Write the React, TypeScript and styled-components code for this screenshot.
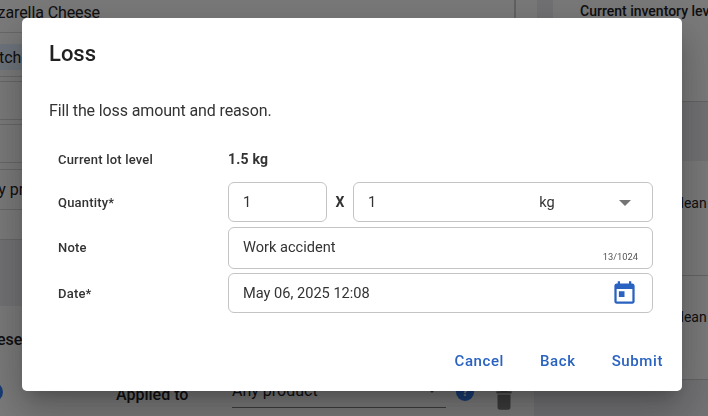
import { createGlobalStyle, styled } from 'styled-components';

const GlobalStyle = createGlobalStyle`
  html, body {
    margin: 0;
    padding: 0;
    overflow: hidden;
    background: #f4f4f5;
    font-family: Roboto, "Liberation Sans", sans-serif;
  }
`;

/* the page behind the dialog */
const Page = styled.div`
  display: grid;
  grid-template-columns: 537px 16px 1fr;
  width: 708px;
  height: 416px;
  overflow: hidden;
  color: #1f2024;
  font-size: 16px;
`;

const LeftPane = styled.div`
  display: flex;
  flex-direction: column;
  overflow: hidden;
`;

const SideBand = styled.div`
  background: #e4e4ea;
`;

const RightPane = styled.div`
  display: flex;
  flex-direction: column;
  overflow: hidden;
`;

const LeftRow = styled.div<{ $h: number; $line?: boolean; $tint?: string }>`
  flex: none;
  height: ${({ $h }) => $h}px;
  box-sizing: border-box;
  display: flex;
  align-items: center;
  white-space: nowrap;
  background: ${({ $tint }) => $tint || 'transparent'};
  border-bottom: ${({ $line }) => ($line ? '1px solid #cfcfd2' : '0')};
`;

const HeadCell = styled.div`
  width: 516px;
  height: 100%;
  box-sizing: border-box;
  padding-bottom: 8px;
  display: flex;
  align-items: center;
  letter-spacing: -0.1px;
  border-right: 2px solid #c4c4c6;
`;

const CutText = styled.span<{ $shift: number; $bold?: boolean }>`
  margin-left: ${({ $shift }) => $shift}px;
  font-weight: ${({ $bold }) => ($bold ? 500 : 400)};
`;

const Chip = styled.div`
  margin-left: -37px;
  padding: 0 14px 0 22px;
  height: 26px;
  display: flex;
  align-items: center;
  background: #dbe7f7;
  font-size: 16px;
`;

const AppliedRow = styled.div`
  flex: none;
  display: flex;
  align-items: flex-start;
  height: 44px;
`;

const HelpDot = styled.div`
  flex: none;
  width: 20px;
  height: 20px;
  margin: 10px 0 0 -17px;
  border-radius: 50%;
  background: #2f78e8;
`;

const AppliedLabel = styled.span`
  flex: none;
  margin: 13px 0 0 113px;
  width: 116px;
  line-height: 19px;
  font-weight: 500;
  font-size: 16px;
`;

const FakeSelect = styled.div`
  flex: none;
  width: 214px;
  height: 32px;
  margin-top: 4px;
  box-sizing: border-box;
  border-bottom: 1px solid #77777a;
  display: flex;
  align-items: center;
  justify-content: space-between;
  padding: 0 9px 2px 0;
`;

const SmallCaret = styled.div`
  width: 0;
  height: 0;
  border-left: 5px solid transparent;
  border-right: 5px solid transparent;
  border-top: 5px solid #555;
`;

const HelpIcon = styled.div`
  flex: none;
  width: 18px;
  height: 18px;
  margin: 11px 0 0 10px;
  border-radius: 50%;
  background: #2f78e8;
  color: #fff;
  font-size: 13px;
  font-weight: 700;
  line-height: 18px;
  text-align: center;
`;

const TrashIcon = styled.svg`
  flex: none;
  width: 26px;
  height: 26px;
  margin: 15px 0 0 17px;
  fill: #777;
`;

const PaneEdge = styled.div`
  align-self: stretch;
  margin-left: auto;
  width: 3px;
  background: #e4e4ea;
`;

const RightRow = styled.div<{ $h: number; $line?: boolean; $tint?: string; $lift?: number }>`
  flex: none;
  height: ${({ $h }) => $h}px;
  box-sizing: border-box;
  display: flex;
  align-items: center;
  padding: 0 0 ${({ $lift }) => $lift || 0}px 27px;
  white-space: nowrap;
  font-size: 14px;
  background: ${({ $tint }) => $tint || 'transparent'};
  border-bottom: ${({ $line }) => ($line ? '1px solid #c8c8cb' : '0')};
`;

const InventoryLabel = styled.span`
  font-size: 14px;
  font-weight: 500;
`;

const DeanText = styled.span`
  margin-left: 96px;
  font-size: 14px;
`;

/* dialog */
const Backdrop = styled.div`
  position: fixed;
  inset: 0;
  background: rgba(0, 0, 0, 0.5);
  display: flex;
  align-items: flex-start;
  padding: 18px 0 0 22px;
`;

const Dialog = styled.div`
  width: 660px;
  height: 373px;
  box-sizing: border-box;
  padding: 24px 19px 0 27px;
  background: #fff;
  border-radius: 5px;
  color: #212121;
  box-shadow: 0 11px 15px -7px rgba(0, 0, 0, 0.2), 0 24px 38px 3px rgba(0, 0, 0, 0.14),
    0 9px 46px 8px rgba(0, 0, 0, 0.12);
  display: flex;
  flex-direction: column;
`;

const Title = styled.h2`
  margin: 0;
  font-size: 22px;
  line-height: 24px;
  font-weight: 500;
`;

const Intro = styled.p`
  margin: 33px 0 0;
  font-size: 16px;
  line-height: 24px;
  letter-spacing: -0.13px;
  color: #333;
`;

const Form = styled.div`
  margin-top: 26px;
  padding-left: 9px;
  padding-right: 10px;
  display: grid;
  grid-template-columns: 170px 1fr;
  grid-template-rows: 29px 40px 43px 40px;
  row-gap: 4px;
  align-items: center;
`;

const Label = styled.div`
  font-size: 13px;
  font-weight: 500;
  letter-spacing: 0.2px;
  color: #333;
`;

const LevelLabel = styled(Label)`
  align-self: start;
  line-height: 21px;
`;

const LevelValue = styled.div`
  align-self: start;
  font-size: 14px;
  line-height: 21px;
  font-weight: 700;
  letter-spacing: 0.2px;
  color: #333;
`;

const QuantityRow = styled.div`
  display: flex;
  align-items: center;
  height: 40px;
`;

const Field = styled.div<{ $grow?: boolean; $w?: number }>`
  position: relative;
  box-sizing: border-box;
  width: ${({ $w }) => ($w ? `${$w}px` : 'auto')};
  flex: ${({ $grow }) => ($grow ? 1 : 'none')};
  height: 40px;
  padding: 0 14px;
  border: 1px solid #c4c4c4;
  border-radius: 6px;
  display: flex;
  align-items: center;
  font-size: 14.6px;
  color: #333;
`;

const NoteField = styled(Field)`
  align-self: end;
  height: 42px;
  padding-bottom: 2px;
`;

const Times = styled.span`
  width: 26px;
  text-align: center;
  font-size: 14px;
  font-weight: 700;
  color: #333;
`;

const Unit = styled.span`
  margin-left: 163px;
`;

const Caret = styled.div`
  position: absolute;
  right: 21px;
  top: 17px;
  width: 0;
  height: 0;
  border-left: 6px solid transparent;
  border-right: 6px solid transparent;
  border-top: 6px solid #757575;
`;

const Counter = styled.span`
  position: absolute;
  right: 14px;
  bottom: 6px;
  font-size: 9.3px;
  color: #555;
`;

const CalendarIcon = styled.svg`
  position: absolute;
  right: 14px;
  top: 6px;
  width: 27px;
  height: 27px;
  fill: #2962c0;
`;

const Actions = styled.div`
  margin-top: 27px;
  display: flex;
  justify-content: flex-end;
  gap: 36px;
`;

const ActionButton = styled.button`
  padding: 0;
  border: 0;
  background: none;
  font-family: inherit;
  font-size: 15px;
  font-weight: 500;
  line-height: 42px;
  letter-spacing: 0.6px;
  color: #2962c0;
`;

export default function App() {
  return (
    <>
      <GlobalStyle />
      <Page>
        <LeftPane>
          <LeftRow $h={33} $line>
            <HeadCell>
              <CutText $shift={-33}>Mozzarella Cheese</CutText>
            </HeadCell>
          </LeftRow>
          <LeftRow $h={11} />
          <LeftRow $h={26}>
            <Chip>Kitchen</Chip>
          </LeftRow>
          <LeftRow $h={7} $line />
          <LeftRow $h={5} $line />
          <LeftRow $h={38} $line />
          <LeftRow $h={5} $line />
          <LeftRow $h={38} $line />
          <LeftRow $h={7} $line />
          <LeftRow $h={40} $line>
            <CutText $shift={-21}>Any product</CutText>
          </LeftRow>
          <LeftRow $h={30} $line />
          <LeftRow $h={66} $tint="#e4e4ea" />
          <LeftRow $h={66}>
            <CutText $shift={-31} $bold>Cheese</CutText>
          </LeftRow>
          <AppliedRow>
            <HelpDot />
            <AppliedLabel>Applied to</AppliedLabel>
            <FakeSelect>
              Any product
              <SmallCaret />
            </FakeSelect>
            <HelpIcon>?</HelpIcon>
            <TrashIcon viewBox="0 0 24 24">
              <path d="M6 19c0 1.1.9 2 2 2h8c1.1 0 2-.9 2-2V7H6v12zM19 4h-3.5l-1-1h-5l-1 1H5v2h14V4z" />
            </TrashIcon>
            <PaneEdge />
          </AppliedRow>
        </LeftPane>
        <SideBand />
        <RightPane>
          <RightRow $h={102} $line $lift={80}>
            <InventoryLabel>Current inventory level</InventoryLabel>
          </RightRow>
          <RightRow $h={59} $tint="#e4e4ea" />
          <RightRow $h={115} $line $lift={30}>
            <DeanText>dean</DeanText>
          </RightRow>
          <RightRow $h={104} $line $lift={22}>
            <DeanText>dean</DeanText>
          </RightRow>
          <RightRow $h={36} $tint="#e4e4ea" />
        </RightPane>
      </Page>

      <Backdrop>
        <Dialog>
          <Title>Loss</Title>
          <Intro>Fill the loss amount and reason.</Intro>
          <Form>
            <LevelLabel>Current lot level</LevelLabel>
            <LevelValue>1.5 kg</LevelValue>
            <Label>Quantity*</Label>
            <QuantityRow>
              <Field $w={99}>1</Field>
              <Times>X</Times>
              <Field $grow>
                1<Unit>kg</Unit>
                <Caret />
              </Field>
            </QuantityRow>
            <Label>Note</Label>
            <NoteField>
              Work accident
              <Counter>13/1024</Counter>
            </NoteField>
            <Label>Date*</Label>
            <Field>
              May 06, 2025 12:08
              <CalendarIcon viewBox="0 0 24 24">
                <path d="M19 3h-1V1h-2v2H8V1H6v2H5c-1.11 0-1.99.9-1.99 2L3 19c0 1.1.89 2 2 2h14c1.1 0 2-.9 2-2V5c0-1.1-.9-2-2-2zm0 16H5V8h14v11zM7 10h5v5H7z" />
              </CalendarIcon>
            </Field>
          </Form>
          <Actions>
            <ActionButton>Cancel</ActionButton>
            <ActionButton>Back</ActionButton>
            <ActionButton>Submit</ActionButton>
          </Actions>
        </Dialog>
      </Backdrop>
    </>
  );
}
